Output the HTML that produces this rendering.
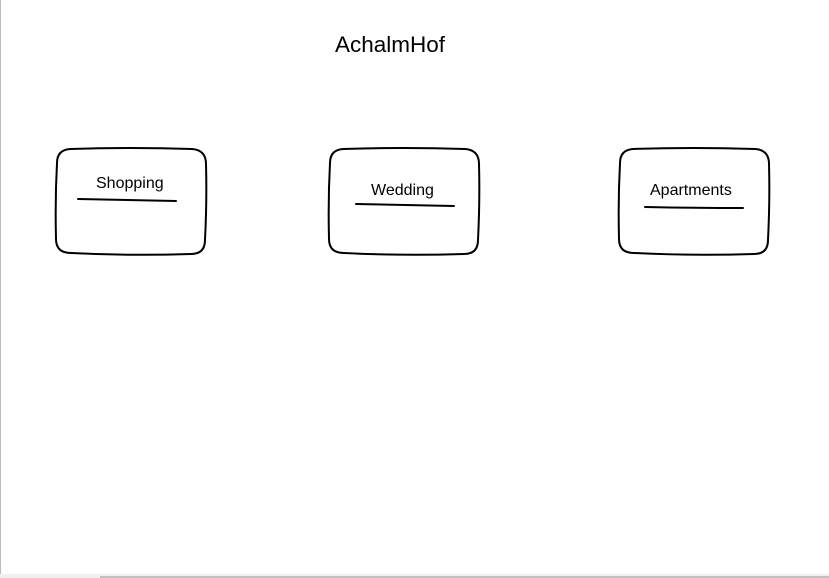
<!DOCTYPE html>
<html><head><style>
body{margin:0;width:829px;height:578px;background:#fff;position:relative;overflow:hidden;font-family:"Liberation Sans",sans-serif;}
.t{position:absolute;font-size:16px;color:#000;}
</style></head><body>
<div style="position:absolute;left:0;top:0;width:1px;height:578px;background:#bbb"></div>
<div style="position:absolute;left:0;top:574px;width:829px;height:4px;background:#f0f0f0"></div>
<div style="position:absolute;left:100px;top:576px;width:729px;height:2px;background:#c0c0c0"></div>
<div class="t" style="left:335px;top:32px;font-size:22.5px">AchalmHof</div>
<svg width="829" height="578" style="position:absolute;left:0;top:0" fill="none" stroke="#000" stroke-width="2" stroke-linecap="round">
<path d="M70 149 Q130 147 192 149 Q206 150 206 164 Q207 200 205 240 Q205 254 191 254 Q130 256 71 253 Q56 253 56 239 Q55 200 57 163 Q57 150 70 149Z"/>
<path d="M78 199 Q130 200 176 201"/>
<path d="M343 149 Q403 147 465 149 Q479 150 479 164 Q480 200 478 240 Q478 254 464 254 Q403 256 344 253 Q329 253 329 239 Q328 200 330 163 Q330 150 343 149Z"/>
<path d="M356 204 Q405 205 454 206"/>
<path d="M633 149 Q693 147 755 149 Q769 150 769 164 Q770 200 768 240 Q768 254 754 254 Q693 256 634 253 Q619 253 619 239 Q618 200 620 163 Q620 150 633 149Z"/>
<path d="M645 207 Q695 208 743 208"/>
</svg>
<div class="t" style="left:96px;top:175px">Shopping</div>
<div class="t" style="left:371px;top:182px">Wedding</div>
<div class="t" style="left:650px;top:182px">Apartments</div>
</body></html>
